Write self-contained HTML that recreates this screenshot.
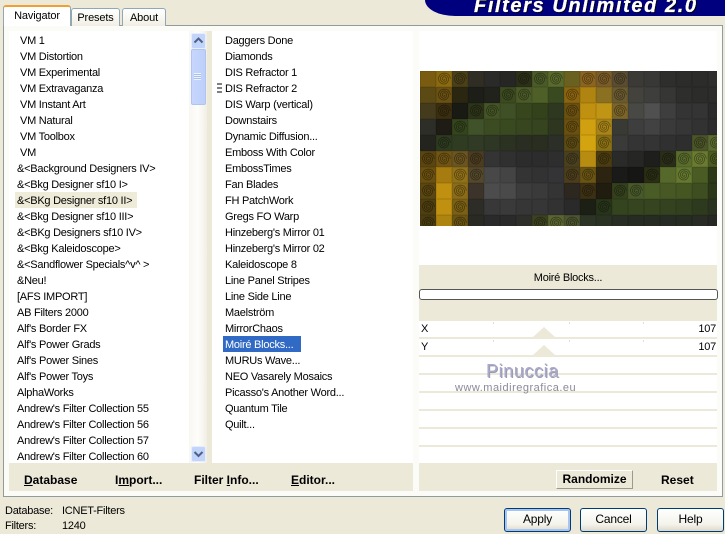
<!DOCTYPE html>
<html><head><meta charset="utf-8">
<style>
html,body{margin:0;padding:0}
body{width:725px;height:532px;overflow:hidden;background:#ECE9D8;position:relative;font-family:"Liberation Sans",sans-serif;font-size:11px;color:#000;letter-spacing:-.25px}
.a{position:absolute}
.list div{height:16px;line-height:16px;white-space:nowrap;position:relative}
.btn{position:absolute;box-sizing:border-box;border:1px solid #003C74;border-radius:3px;background:linear-gradient(#fff,#F4F3EC 70%,#DDD8C8);text-align:center;font-size:12px;line-height:21px;letter-spacing:-.2px}
.b{position:absolute;font-weight:bold;font-size:12px;line-height:16px;letter-spacing:0;white-space:nowrap}
.tab{position:absolute;box-sizing:border-box;border:1px solid #91A7B4;border-bottom:none;border-radius:3px 3px 0 0;background:linear-gradient(#fff,#F1EFE4);text-align:center;font-size:11px;letter-spacing:-.15px}
.sep{position:absolute;left:419px;width:298px;height:2px;background:#ECE9D8}
.tri{position:absolute;width:0;height:0;border-left:11px solid transparent;border-right:11px solid transparent;border-bottom:10px solid #ECE9D8}
.tick{position:absolute;width:1px;height:2px;background:#ddd}
</style></head><body>

<div class="a" style="left:425px;top:-30px;width:300px;height:46px;background:#00007F;border-radius:0 0 0 30px/0 0 0 16px"></div>
<div class="a" style="left:474px;top:-5px;font:italic bold 20px/22px 'Liberation Sans',sans-serif;letter-spacing:1.6px;color:#fff;text-shadow:1px 1px 0 #000;-webkit-text-stroke:.3px #fff;white-space:nowrap">Filters Unlimited 2.0</div>

<div class="a" style="left:3px;top:25px;width:718px;height:470px;border:1px solid #919B9C;background:#FBFBF8"></div>
<div class="tab" style="left:71px;top:8px;width:49px;height:18px;line-height:18px">Presets</div>
<div class="tab" style="left:122px;top:8px;width:44px;height:18px;line-height:18px">About</div>
<div class="tab" style="left:3px;top:5px;width:68px;height:21px;line-height:19px;background:#fff;border-color:#91A7B4;border-top:2px solid #F0A030;z-index:2">Navigator</div>

<div class="a" style="left:9px;top:31px;width:404px;height:460px;background:#ECE9D8"></div>
<div class="a" style="left:9px;top:31px;width:198px;height:432px;background:#fff;overflow:hidden"></div>
<div class="a" style="left:212px;top:31px;width:201px;height:432px;background:#fff"></div>

<div class="a" style="left:189px;top:31px;width:18px;height:432px;background:linear-gradient(90deg,#F8F7F2,#FDFDFB 50%,#F0EEE4)"></div>
<div class="a" style="left:191px;top:33px;width:13px;height:14px;background:#C3D4FB;border:1px solid #E6EEFE;border-radius:2px"></div>
<svg class="a" style="left:191px;top:33px" width="15" height="16"><path d="M3.5 9.5 L7.5 5.5 L11.5 9.5" fill="none" stroke="#4D6185" stroke-width="2"/></svg>
<div class="a" style="left:191px;top:49px;width:13px;height:54px;background:linear-gradient(90deg,#C6D6FC,#BDD0FA);border:1px solid #AFC4F2;border-radius:2px"></div>
<div class="a" style="left:194px;top:73px;width:7px;height:7px;background:repeating-linear-gradient(#EEF4FE 0 1px,#A8BEF0 1px 2px)"></div>
<div class="a" style="left:191px;top:446px;width:13px;height:14px;background:#C3D4FB;border:1px solid #E6EEFE;border-radius:2px"></div>
<svg class="a" style="left:191px;top:446px" width="15" height="16"><path d="M3.5 6 L7.5 10 L11.5 6" fill="none" stroke="#4D6185" stroke-width="2"/></svg>

<div class="a" style="left:15px;top:192px;width:122px;height:16px;background:#EFEBD9"></div>
<div class="a list" style="left:17px;top:32px;width:172px;height:431px;overflow:hidden">
<div style="left:3px;top:1px">VM 1</div><div style="left:3px;top:1px">VM Distortion</div><div style="left:3px;top:1px">VM Experimental</div><div style="left:3px;top:1px">VM Extravaganza</div><div style="left:3px;top:1px">VM Instant Art</div><div style="left:3px;top:1px">VM Natural</div><div style="left:3px;top:1px">VM Toolbox</div><div style="left:3px;top:1px">VM</div>
<div style="top:1px">&amp;&lt;Background Designers IV&gt;</div><div style="top:1px">&amp;&lt;Bkg Designer sf10 I&gt;</div><div style="top:1px">&amp;&lt;BKg Designer sf10 II&gt;</div><div style="top:1px">&amp;&lt;Bkg Designer sf10 III&gt;</div><div style="top:1px">&amp;&lt;BKg Designers sf10 IV&gt;</div><div style="top:1px">&amp;&lt;Bkg Kaleidoscope&gt;</div><div style="top:1px">&amp;&lt;Sandflower Specials^v^ &gt;</div><div style="top:1px">&amp;Neu!</div><div style="top:1px">[AFS IMPORT]</div><div style="top:1px">AB Filters 2000</div><div style="top:1px">Alf's Border FX</div><div style="top:1px">Alf's Power Grads</div><div style="top:1px">Alf's Power Sines</div><div style="top:1px">Alf's Power Toys</div><div style="top:1px">AlphaWorks</div><div style="top:1px">Andrew's Filter Collection 55</div><div style="top:1px">Andrew's Filter Collection 56</div><div style="top:1px">Andrew's Filter Collection 57</div><div style="top:1px">Andrew's Filter Collection 60</div>
</div>

<div class="a" style="left:217px;top:83px;width:5px;height:10px;background:repeating-linear-gradient(#808080 0 2px,#fff 2px 4px)"></div>
<div class="a" style="left:223px;top:336px;width:78px;height:16px;background:#316AC5"></div>
<div class="a list" style="left:225px;top:33px;width:185px">
<div>Daggers Done</div><div>Diamonds</div><div>DIS Refractor 1</div><div>DIS Refractor 2</div><div>DIS Warp (vertical)</div><div>Downstairs</div><div>Dynamic Diffusion...</div><div>Emboss With Color</div><div>EmbossTimes</div><div>Fan Blades</div><div>FH PatchWork</div><div>Gregs FO Warp</div><div>Hinzeberg's Mirror 01</div><div>Hinzeberg's Mirror 02</div><div>Kaleidoscope 8</div><div>Line Panel Stripes</div><div>Line Side Line</div><div>Maelström</div><div>MirrorChaos</div><div style="color:#fff">Moiré Blocks...</div><div>MURUs Wave...</div><div>NEO Vasarely Mosaics</div><div>Picasso's Another Word...</div><div>Quantum Tile</div><div>Quilt...</div>
</div>

<div class="b" style="left:24px;top:472px"><u>D</u>atabase</div>
<div class="b" style="left:115px;top:472px">I<u>m</u>port...</div>
<div class="b" style="left:194px;top:472px">Filter <u>I</u>nfo...</div>
<div class="b" style="left:291px;top:472px"><u>E</u>ditor...</div>

<div class="a" style="left:419px;top:31px;width:298px;height:234px;background:#fff"></div>
<div class="a" id="img" style="left:420px;top:71px;width:297px;height:155px;background:#2c2c2a;overflow:hidden"></div>
<div class="a" style="left:419px;top:265px;width:298px;height:56px;background:#ECE9D8"></div>
<div class="a" style="left:419px;top:270px;width:298px;text-align:center;line-height:16px">Moiré Blocks...</div>
<div class="a" style="left:419px;top:289px;width:299px;height:11px;box-sizing:border-box;background:#fff;border:1px solid #555;border-radius:3px"></div>

<div class="a" style="left:419px;top:321px;width:298px;height:142px;background:#fff"></div>
<div class="sep" style="top:337px"></div><div class="sep" style="top:355px"></div><div class="sep" style="top:373px"></div><div class="sep" style="top:391px"></div><div class="sep" style="top:409px"></div><div class="sep" style="top:427px"></div><div class="sep" style="top:445px"></div>
<div class="tri" style="left:533px;top:327px"></div><div class="tri" style="left:533px;top:345px"></div>
<div class="tick" style="left:493px;top:322px"></div><div class="tick" style="left:569px;top:322px"></div><div class="tick" style="left:643px;top:322px"></div>
<div class="tick" style="left:493px;top:340px"></div><div class="tick" style="left:569px;top:340px"></div><div class="tick" style="left:643px;top:340px"></div>
<div class="a" style="left:421px;top:321px;line-height:16px">X</div>
<div class="a" style="left:421px;top:339px;line-height:16px">Y</div>
<div class="a" style="right:9px;top:321px;line-height:16px">107</div>
<div class="a" style="right:9px;top:339px;line-height:16px">107</div>

<div class="a" style="left:486px;top:360px;font-size:18px;line-height:22px;letter-spacing:.6px;color:#A9A9C9;text-shadow:1px 1px 0 #9a9ab4;white-space:nowrap">Pinuccia</div>
<div class="a" style="left:455px;top:381px;font-size:11px;line-height:14px;letter-spacing:.5px;color:#8A8A9A;white-space:nowrap">www.maidiregrafica.eu</div>

<div class="a" style="left:419px;top:463px;width:298px;height:28px;background:#ECE9D8"></div>
<div class="a" style="left:556px;top:470px;width:77px;height:19px;box-sizing:border-box;border:1px solid;border-color:#fff #9c9a8c #9c9a8c #fff;background:#ECE9D8;text-align:center;font-weight:bold;font-size:12px;line-height:17px;letter-spacing:0">Randomize</div>
<div class="b" style="left:661px;top:472px">Reset</div>

<div class="a" style="left:5px;top:504px;line-height:15px">Database:</div>
<div class="a" style="left:62px;top:504px;line-height:15px">ICNET-Filters</div>
<div class="a" style="left:5px;top:519px;line-height:15px">Filters:</div>
<div class="a" style="left:62px;top:519px;line-height:15px">1240</div>

<div class="btn" style="left:504px;top:508px;width:67px;height:24px;box-shadow:inset 0 0 0 2px #A9C4EE">Apply</div>
<div class="btn" style="left:580px;top:508px;width:67px;height:24px">Cancel</div>
<div class="btn" style="left:657px;top:508px;width:67px;height:24px">Help</div>

<script>
var g=[
"7a5c10 8a6a10 4a4018 302e24 2a2a28 262624 2c3018 4a5a28 5a6a2c 6a6020 8a6420 7a5c28 5a4c30 3c3a36 383836 2e2e2c 2c2c2a 2c2c2a 2e2e2c",
"5c4a14 6a5012 2a2610 1e1e18 22221c 3c4a20 4a5a28 4e6028 3a4a20 8a6410 b08410 8a7020 6a5a30 44423c 3e3e3c 363634 2e2e2c 2c2c2a 2c2c2a",
"443a1c 3a2e10 1a1a14 2c3418 445426 405026 38461e 34421c 2e3820 6a5010 c09010 c09414 7a6428 484844 505050 3e3e3e 343434 343434 2a2a2a",
"2e2e28 1e1c14 34441c 40522a 3c4c22 3a4a20 384620 364420 2e3620 6a5010 d0a010 a88418 3a3a34 3e3e3e 424242 3a3a3a 363636 323232 2c2c2c",
"24241e 2e3a20 303c22 303a24 2e3624 2c3222 2a2e22 2a2e20 2c2e28 5c4a14 d4a410 8a7014 3a3a38 343434 343434 303030 2e2e2e 4a5428 5a6a30",
"5a4410 705414 6a5420 4a3c20 343434 303030 2c2c2c 2c2c2c 2e2e2e 4a4020 b88c10 4a3c10 2a2a28 262624 1e1e1c 2a2e18 5a6c2c 6a7a30 4a5a20",
"6a5010 a67c10 907018 54482c 484848 444444 343434 323232 343436 4c3e1c 6a5414 2c2410 1a1a18 161614 2a2e14 56682a 647830 4a5c24 2c3818",
"5a4610 c09010 8a6c18 3c342a 4c4c4c 4a4a4a 3c3c3c 3a3a3a 343434 2c2820 3c3014 201c10 34401c 48582a 4a5c26 485824 465622 3e4e20 2c3618",
"4e3e10 c09010 7a6014 2e2c26 383838 3a3a3a 363636 363636 323232 2a2a2a 1c2014 28341a 34441e 364420 364420 344220 324020 2e3a1e 2a3220",
"4a3c10 ae8410 6a5414 2a2a24 2a2a2a 2a2a2a 2e2e2a 3c4220 5a6430 4c5430 2c3426 2a3224 282e24 262c22 262c22 262c24 262c22 282c24 262824"];
var m=[[1,2,6,7,8,10,11,12],[1,5,6,9,12],[1,3,4,9,12],[2,9,11],[1,9,11,17,18],[0,1,2,3,9,11,15,16,17,18],[0,2,3,9,10,14,16],[0,2,10,12,13],[0,2,11],[0,2,7,8,9]];
function sp(cx,cy){var d="",t,r;for(t=0;t<=19;t+=.4){r=.8+t*.3;d+=(t?"L":"M")+(cx+r*Math.cos(t)).toFixed(1)+" "+(cy+r*Math.sin(t)).toFixed(1);}return d;}
var s='<svg width="297" height="155" style="display:block;filter:blur(.35px)">';
g.forEach(function(r,y){r.split(" ").forEach(function(c,x){
var X=x*16,Y=y*16;
s+='<rect x="'+X+'" y="'+Y+'" width="16" height="16" fill="#'+c+'"/>';
s+='<rect x="'+(X+.5)+'" y="'+(Y+.5)+'" width="15" height="15" fill="none" stroke="#000" stroke-opacity=".08"/>';
if(m[y].indexOf(x)>=0){s+='<path d="'+sp(X+8,Y+8)+'" fill="none" stroke="#000" stroke-width=".75" stroke-opacity=".42"/>';}
});});
document.getElementById("img").innerHTML=s+'</svg>';
</script>
</body></html>
